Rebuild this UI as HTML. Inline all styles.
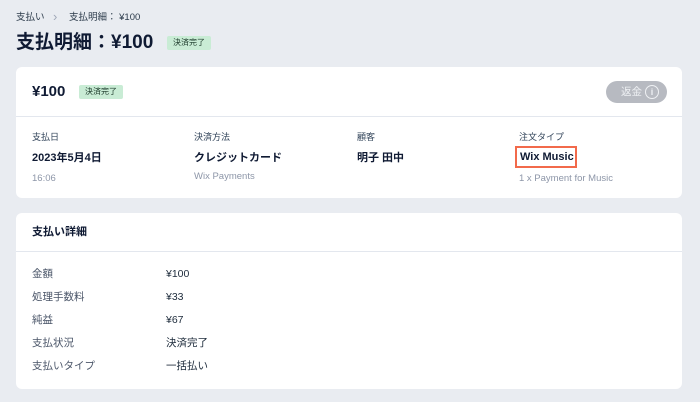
<!DOCTYPE html>
<html><head><meta charset="utf-8"><style>
*{margin:0;padding:0;box-sizing:border-box}
body{width:700px;height:402px;background:#e9ecf1;font-family:"Liberation Sans","Noto Sans CJK JP",sans-serif;color:#162d3d;position:relative;overflow:hidden}
.a{position:absolute;white-space:nowrap;line-height:1.45}
.card{position:absolute;left:16px;width:666px;background:#fff;border-radius:6px}
.badge{position:absolute;background:#c9ecd5;color:#1c3a2a;font-size:8px;text-align:center;border-radius:2px}
.lbl{font-size:9px;color:#32445a}
.val{font-size:11px;font-weight:bold;color:#0f1a33}
.sub{font-size:9.5px;color:#8d96a8}
.r{font-size:10.5px;color:#4a5568}
.v{font-size:10.5px;color:#1c2a3a}
</style></head><body>
<div class="a" style="left:16px;top:11px;font-size:9.5px;color:#2b3a4a">支払い</div>
<div class="a" style="left:53px;top:8px;font-size:13px;color:#a0a8b8">›</div>
<div class="a" style="left:69px;top:11px;font-size:9.5px;color:#2b3a4a">支払明細： ¥100</div>
<div class="a" style="left:16px;top:29px;font-size:19px;font-weight:bold;color:#0f1a33">支払明細：¥100</div>
<div class="badge" style="left:167px;top:36px;width:44px;height:14px;line-height:14px">決済完了</div>

<div class="card" style="top:67px;height:131px">
  <div style="position:absolute;left:0;right:0;top:49px;border-top:1px solid #e3e7ee"></div>
</div>
<div class="a" style="left:32px;top:81px;font-size:15px;font-weight:bold;color:#0f1a33">¥100</div>
<div class="badge" style="left:79px;top:85px;width:44px;height:14px;line-height:14px">決済完了</div>
<div class="a" style="left:606px;top:81px;width:61px;height:22px;border-radius:11px;background:#b7bac1;color:#eef0f3;font-size:10.5px;line-height:22px;padding-left:15px">返金<span style="position:absolute;left:39px;top:4px;width:14px;height:14px;border:1.3px solid #eef0f3;border-radius:50%;font-size:9px;line-height:12px;text-align:center;font-weight:bold">i</span></div>

<div class="a lbl" style="left:32px;top:131px">支払日</div>
<div class="a val" style="left:32px;top:151px">2023年5月4日</div>
<div class="a sub" style="left:32px;top:172px">16:06</div>
<div class="a lbl" style="left:194px;top:131px">決済方法</div>
<div class="a val" style="left:194px;top:151px">クレジットカード</div>
<div class="a sub" style="left:194px;top:170px">Wix Payments</div>
<div class="a lbl" style="left:357px;top:131px">顧客</div>
<div class="a val" style="left:357px;top:151px">明子 田中</div>
<div class="a lbl" style="left:519px;top:131px">注文タイプ</div>
<div class="a" style="left:515px;top:146px;width:62px;height:22px;border:2px solid #f26a4b"></div>
<div class="a val" style="left:520px;top:150px">Wix Music</div>
<div class="a sub" style="left:519px;top:172px">1 x Payment for Music</div>

<div class="card" style="top:213px;height:176px">
  <div style="position:absolute;left:0;right:0;top:38px;border-top:1px solid #e3e7ee"></div>
</div>
<div class="a" style="left:32px;top:225px;font-size:11px;font-weight:bold;color:#0f1a33">支払い詳細</div>
<div class="a r" style="left:32px;top:267px">金額</div><div class="a v" style="left:166px;top:267px">¥100</div>
<div class="a r" style="left:32px;top:290px">処理手数料</div><div class="a v" style="left:166px;top:290px">¥33</div>
<div class="a r" style="left:32px;top:313px">純益</div><div class="a v" style="left:166px;top:313px">¥67</div>
<div class="a r" style="left:32px;top:336px">支払状況</div><div class="a v" style="left:166px;top:336px">決済完了</div>
<div class="a r" style="left:32px;top:359px">支払いタイプ</div><div class="a v" style="left:166px;top:359px">一括払い</div>
</body></html>
